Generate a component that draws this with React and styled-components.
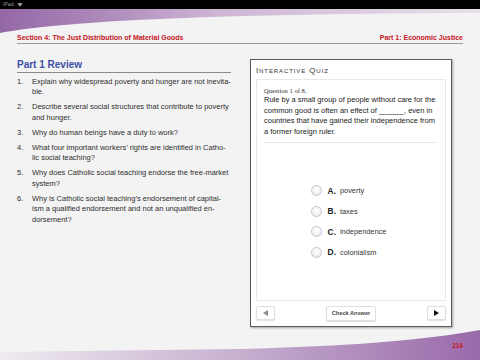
import React from 'react';
import styled, { createGlobalStyle } from 'styled-components';

const GlobalStyle = createGlobalStyle`
  html, body { margin: 0; padding: 0; }
  body {
    width: 480px; height: 360px; overflow: hidden;
    background: #f2f2f2;
    font-family: "Liberation Sans", Arial, sans-serif;
  }
  * { box-sizing: border-box; }
`;

const Page = styled.div`
  width: 480px; height: 360px;
  display: flex; flex-direction: column;
  overflow: hidden;
  background: #f3f3f3;
`;

const StatusBar = styled.div`
  flex: none;
  height: 9px; background: #000;
  display: flex; align-items: center; gap: 3px;
  padding-left: 3px;
  color: #9a9a9a; font-size: 5.3px; line-height: 9px;
`;

const Swoosh = styled.svg`
  display: block; flex: none;
`;

const RunningHead = styled.header`
  flex: none;
  margin: 0 17px;
  height: 9.5px;
  display: flex; justify-content: space-between; align-items: flex-start;
  border-bottom: 1.5px solid #9c9c9c;
  color: #c4161c; font-weight: 700; font-size: 7px; line-height: 8px;
`;

const Content = styled.main`
  flex: 1;
  display: flex; align-items: flex-start;
  padding: 0 17px;
  min-height: 0;
`;

const ReviewColumn = styled.section`
  width: 214px; flex: none;
  padding-top: 15px;
`;

const ReviewTitle = styled.h2`
  margin: 0;
  font-size: 10px; line-height: 12px; font-weight: 700;
  color: #3c4fa6;
  padding-bottom: 1px;
  border-bottom: 1px solid #8a8a8a;
`;

const ReviewList = styled.ol`
  list-style: none; margin: 4.4px 0 0; padding: 0;
  display: flex; flex-direction: column; gap: 4.7px;
`;

const ReviewItem = styled.li`
  display: grid; grid-template-columns: 15px 1fr;
  font-size: 7.5px; line-height: 10.4px; color: #2e2e2e;
  white-space: nowrap;
`;

const QuizBox = styled.section`
  width: 202px; height: 268px; flex: none;
  margin: 15.5px 0 0 19px;
  background: #fff;
  border: 1px solid #5c5c5c;
  box-shadow: 1px 1px 2px rgba(0,0,0,0.35);
  display: flex; flex-direction: column;
  padding: 0 5px 0 5px;
`;

const QuizTitle = styled.h3`
  margin: 5.7px 0 0; padding: 0;
  font-size: 8px; line-height: 10px; font-weight: 400;
  font-variant: small-caps; letter-spacing: 0.9px;
  color: #333;
`;

const QuizCard = styled.div`
  flex: 1;
  margin-top: 3.6px;
  border: 1px solid #e9e9e9;
  display: flex; flex-direction: column;
  padding: 5.9px 8px 0 7px;
`;

const QuestionMeta = styled.div`
  font-family: "Liberation Serif", "Times New Roman", serif;
  font-size: 6.6px; line-height: 9px; color: #333;
`;

const QuestionText = styled.p`
  margin: 0; padding-bottom: 5.3px;
  border-bottom: 1px solid #e8e8e8;
  font-size: 7.5px; line-height: 10.5px; color: #222;
  white-space: nowrap;
`;

const Options = styled.div`
  flex: 1;
  display: flex; flex-direction: column;
  justify-content: center; align-items: center;
`;

const OptionGroup = styled.div`
  display: flex; flex-direction: column;
  margin-left: -4px;
`;

const OptionRow = styled.label`
  height: 20.6px;
  display: flex; align-items: center;
`;

const Radio = styled.span`
  width: 11px; height: 11px; border-radius: 50%;
  border: 1px solid #c6c6c6;
  background: radial-gradient(circle at 50% 35%, #ffffff 0%, #f3f3f3 55%, #e2e2e2 100%);
  margin-right: 6px;
  flex: none;
`;

const OptionLetter = styled.span`
  font-weight: 700; font-size: 8.4px; color: #222;
  margin-right: 4px;
`;

const OptionText = styled.span`
  font-size: 7.4px; color: #333;
`;

const ButtonRow = styled.div`
  flex: none; height: 25.3px;
  display: flex; justify-content: space-between; align-items: center;
`;

const Button = styled.button`
  height: ${p => (p.$wide ? '15.5px' : '14px')};
  width: ${p => (p.$wide ? '50px' : '19px')};
  padding: 0;
  background: #fff;
  border: 1px solid #dedede;
  border-radius: 2px;
  box-shadow: 0 1px 1px rgba(0,0,0,0.12);
  display: flex; align-items: center; justify-content: center;
  font-family: "Liberation Sans", Arial, sans-serif;
  font-size: 5.6px; font-weight: 700; color: #444;
`;

const Footer = styled.footer`
  flex: none; height: 33px;
  position: relative;
  display: flex; justify-content: flex-end;
  padding: 15.4px 17px 0 0;
`;

const FooterArt = styled.svg`
  position: absolute; left: 0; top: 0;
  display: block;
`;

const PageNumber = styled.span`
  position: relative;
  color: #d0141c; font-weight: 700; font-size: 6.5px; line-height: 8px;
`;

const questions = [
  ['Explain why widespread poverty and hunger are not inevita-', 'ble.'],
  ['Describe several social structures that contribute to poverty', 'and hunger.'],
  ['Why do human beings have a duty to work?'],
  ['What four important workers\u2019 rights are identified in Catho-', 'lic social teaching?'],
  ['Why does Catholic social teaching endorse the free-market', 'system?'],
  ['Why is Catholic social teaching\u2019s endorsement of capital-', 'ism a qualified endorsement and not an unqualified en-', 'dorsement?'],
];

const options = [
  ['A.', 'poverty'],
  ['B.', 'taxes'],
  ['C.', 'independence'],
  ['D.', 'colonialism'],
];

const questionLines = [
  'Rule by a small group of people without care for the',
  'common good is often an effect of ______, even in',
  'countries that have gained their independence from',
  'a former foreign ruler.',
];

function Lines({ lines }) {
  return lines.map((l, i) => (
    <React.Fragment key={i}>
      {l}
      {i < lines.length - 1 && <br />}
    </React.Fragment>
  ));
}

export default function App() {
  return (
    <>
      <GlobalStyle />
      <Page>
        <StatusBar>
          <span>iPad</span>
          <svg width="6" height="5" viewBox="0 0 12 10">
            <path d="M6 9.5 L1 3.5 A8 8 0 0 1 11 3.5 Z" fill="#9a9a9a" />
          </svg>
        </StatusBar>
        <Swoosh width="480" height="25" viewBox="0 0 480 25">
          <defs>
            <linearGradient id="topg" x1="0" y1="0" x2="1" y2="0">
              <stop offset="0" stopColor="#9468a6" />
              <stop offset="0.18" stopColor="#a983b7" />
              <stop offset="0.45" stopColor="#cdb5d4" />
              <stop offset="1" stopColor="#e6e0e8" />
            </linearGradient>
          </defs>
          <path d="M0 0 H480 V4 Q100 5 0 24 Z" fill="url(#topg)" />
        </Swoosh>
        <RunningHead>
          <span>Section 4: The Just Distribution of Material Goods</span>
          <span>Part 1: Economic Justice</span>
        </RunningHead>
        <Content>
          <ReviewColumn>
            <ReviewTitle>Part 1 Review</ReviewTitle>
            <ReviewList>
              {questions.map((lines, i) => (
                <ReviewItem key={i}>
                  <span>{i + 1}.</span>
                  <span><Lines lines={lines} /></span>
                </ReviewItem>
              ))}
            </ReviewList>
          </ReviewColumn>
          <QuizBox>
            <QuizTitle>Interactive Quiz</QuizTitle>
            <QuizCard>
              <QuestionMeta>Question 1 of 8.</QuestionMeta>
              <QuestionText><Lines lines={questionLines} /></QuestionText>
              <Options>
                <OptionGroup>
                  {options.map(([letter, text]) => (
                    <OptionRow key={letter}>
                      <Radio />
                      <OptionLetter>{letter}</OptionLetter>
                      <OptionText>{text}</OptionText>
                    </OptionRow>
                  ))}
                </OptionGroup>
              </Options>
            </QuizCard>
            <ButtonRow>
              <Button aria-label="Previous">
                <svg width="5" height="6" viewBox="0 0 5 6"><path d="M5 0 L0 3 L5 6 Z" fill="#8a8a8a" /></svg>
              </Button>
              <Button $wide>Check Answer</Button>
              <Button aria-label="Next">
                <svg width="5" height="6" viewBox="0 0 5 6"><path d="M0 0 L5 3 L0 6 Z" fill="#111" /></svg>
              </Button>
            </ButtonRow>
          </QuizBox>
        </Content>
        <Footer>
          <FooterArt width="480" height="33" viewBox="0 0 480 33">
            <defs>
              <linearGradient id="botg" x1="0" y1="0" x2="1" y2="0">
                <stop offset="0" stopColor="#efebf0" />
                <stop offset="0.5" stopColor="#c6afcf" />
                <stop offset="1" stopColor="#9969aa" />
              </linearGradient>
            </defs>
            <path d="M0 25 L240 22 Q400 18 480 3 V33 H0 Z" fill="url(#botg)" />
          </FooterArt>
          <PageNumber>214</PageNumber>
        </Footer>
      </Page>
    </>
  );
}
